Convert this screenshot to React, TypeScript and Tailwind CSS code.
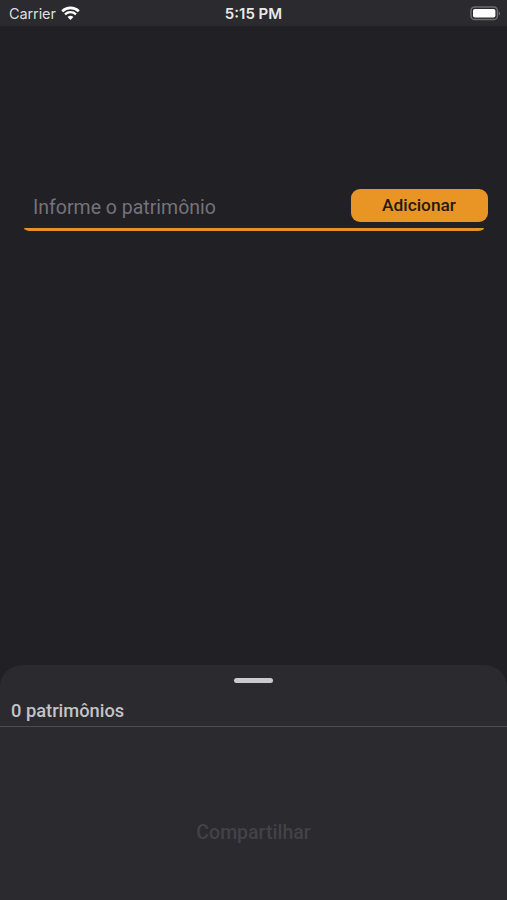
import React from "react";

function WifiIcon() {
  return (
    <svg width="19" height="15" viewBox="0 0 19 15" fill="none">
      <path d="M1.2 5.2C5.9 0.7 13.1 0.7 17.8 5.2" stroke="#fff" strokeWidth="2.6" />
      <path d="M4 8.3C7.2 5.4 11.8 5.4 15 8.3" stroke="#fff" strokeWidth="2.4" />
      <path d="M6.6 11C8.3 9.4 10.7 9.4 12.4 11L9.5 13.9Z" fill="#fff" />
    </svg>
  );
}

function BatteryIcon() {
  return (
    <svg width="31" height="15" viewBox="0 0 31 15" fill="none">
      <rect x="1" y="1" width="26.4" height="12.6" rx="3.6" stroke="#6c6c70" strokeWidth="1.5" />
      <rect x="3" y="3" width="22.4" height="8.6" rx="1.8" fill="#fff" />
      <path d="M28.7 5.2C30.6 6 30.6 8.7 28.7 9.5Z" fill="#6c6c70" />
    </svg>
  );
}

function StatusBar() {
  return (
    <header className="grid h-[26px] grid-cols-3 items-center bg-[#2b2a2f] font-['Inter',sans-serif] text-[14.5px] leading-none">
      <div className="flex items-center gap-[5.5px] pt-px pl-[9px]">
        <span className="pt-0.5 tracking-[-0.1px] text-[#dededf]">Carrier</span>
        <WifiIcon />
      </div>
      <span className="pt-px text-center text-[15px] font-semibold text-[#e9e9ea]">5:15 PM</span>
      <div className="flex justify-end pr-1.5">
        <BatteryIcon />
      </div>
    </header>
  );
}

function AssetForm() {
  return (
    <form className="mt-[163px] mr-[23px] ml-6" onSubmit={(e) => e.preventDefault()}>
      <div className="flex h-[39px] items-start">
        <input
          className="h-9 min-w-0 flex-1 pl-[9px] text-[19.5px] text-white outline-none placeholder:text-[#74737a]"
          placeholder="Informe o patrimônio"
        />
        <button className="-mr-1 h-[33px] w-[137px] rounded-[9px] bg-[#e99526] pr-px text-[17.3px] font-medium text-[#241a12]">
          Adicionar
        </button>
      </div>
      <div className="h-[3px] bg-[#e49329] [border-radius:0_0_6px_6px/0_0_3px_3px]" />
    </form>
  );
}

function BottomSheet({ count }: { count: number }) {
  return (
    <section className="mt-auto flex h-[235px] flex-col rounded-t-[22px] bg-[#2b2a2f]">
      <div className="mx-auto mt-[13px] h-[5px] w-[39px] shrink-0 rounded-full bg-[#cbcacd]" />
      <h2 className="mt-4 h-[27px] pl-[11px] text-[18.3px] leading-6 font-medium text-[#c4c3c7]">
        {count} patrimônios
      </h2>
      <div className="border-b border-[#4c4b50]" />
      <button
        className="mt-[92px] text-[19.5px] leading-7 font-medium text-[#434247]"
        disabled={count === 0}
      >
        Compartilhar
      </button>
    </section>
  );
}

export default function App() {
  return (
    <main className="flex h-[900px] w-full flex-col overflow-hidden bg-[#212025] font-['Roboto',sans-serif]">
      <StatusBar />
      <AssetForm />
      <BottomSheet count={0} />
    </main>
  );
}
